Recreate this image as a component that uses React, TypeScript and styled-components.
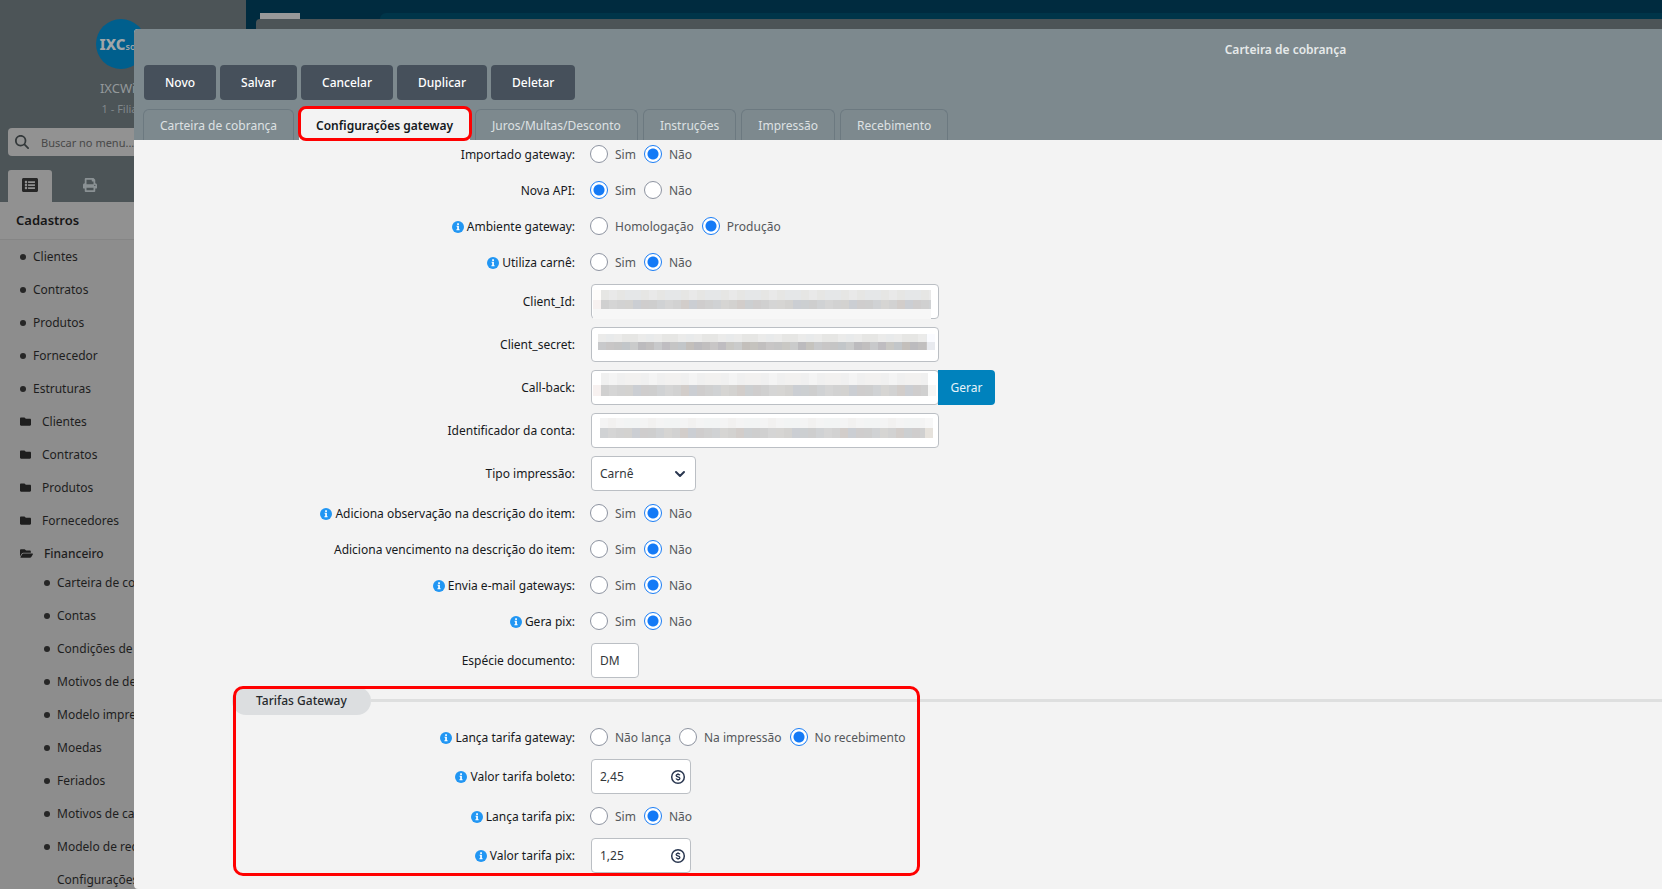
import React from 'react';
import styled, { createGlobalStyle, css } from 'styled-components';
import { ChevronDown } from 'lucide-react';
import { FaListAlt, FaFolder, FaFolderOpen, FaPrint } from 'react-icons/fa';
import { FaMagnifyingGlass } from 'react-icons/fa6';

const GlobalStyle = createGlobalStyle`
  * { box-sizing: border-box; }
  body { margin: 0; background: #8d8d8d; }
  body, button, input, select {
    font-family: "Noto Sans", sans-serif;
    font-size: 12px;
    line-height: 18px;
  }
`;

const Shell = styled.div`
  position: relative;
  display: flex;
  height: 100vh;
  overflow: hidden;
`;

const Sidebar = styled.aside`
  flex: none;
  width: 246px;
  background: #8d8d8d;
`;

const Profile = styled.header`
  display: flex;
  flex-direction: column;
  align-items: center;
  height: 202px;
  padding: 19px 4px 0 0;
  background: #4c5457;
`;

const Logo = styled.div`
  display: flex;
  align-items: baseline;
  justify-content: center;
  width: 50px;
  height: 50px;
  border-radius: 50%;
  background: #005f8d;
  color: #a0a6a8;
  font-size: 9px;
  font-weight: 600;
  line-height: 50px;

  b {
    font-size: 15px;
    font-weight: 800;
  }
`;

const UserName = styled.div`
  margin-top: 10px;
  color: #94999b;
  font-size: 13px;
`;

const Branch = styled.div`
  margin-top: 3px;
  color: #80878a;
  font-size: 11px;
`;

const SearchBox = styled.label`
  display: flex;
  align-items: center;
  gap: 12px;
  align-self: stretch;
  height: 28px;
  margin: 10px 4px 0 8px;
  padding-left: 7px;
  border-radius: 4px;
  background: #929292;
  color: #33383a;

  input {
    flex: 1;
    min-width: 0;
    padding: 2px 0 0;
    border: 0;
    background: transparent;
    font-size: 11px;
    outline: none;
  }
  input::placeholder { color: #484848; opacity: 1; }
`;

const SideTabs = styled.div`
  display: flex;
  align-self: stretch;
  gap: 16px;
  margin-top: 14px;
  padding-left: 8px;
`;

const SideTab = styled.button<{ $active?: boolean }>`
  display: flex;
  align-items: center;
  justify-content: center;
  width: 44px;
  height: 32px;
  padding: 0 0 2px;
  border: 0;
  border-radius: 3px 3px 0 0;
  background: ${(p) => (p.$active ? '#919191' : 'transparent')};
  color: ${(p) => (p.$active ? '#262626' : '#8a9194')};
`;

const MenuTitle = styled.h2`
  margin: 0;
  padding: 9px 16px 10px;
  border-bottom: 1px solid #858585;
  background: #919191;
  color: #161616;
  font-size: 13px;
  font-weight: 600;
  line-height: 18px;
`;

const MenuList = styled.ul<{ $nested?: boolean }>`
  margin: 0;
  padding: ${(p) => (p.$nested ? '0 0 0 24px' : '0')};
  ${(p) => p.$nested && 'margin-top: -4px;'}
  list-style: none;
`;

const MenuLink = styled.a<{ $folder?: boolean; $open?: boolean }>`
  display: flex;
  align-items: center;
  gap: ${(p) => (p.$folder ? 11 : 7)}px;
  height: 33px;
  padding-left: 20px;
  color: #1e1e1e;
  font-weight: ${(p) => (p.$open ? 500 : 400)};
  text-decoration: none;
  white-space: nowrap;
`;

const Bullet = styled.span<{ $hidden?: boolean }>`
  width: 6px;
  height: 6px;
  border-radius: 50%;
  background: ${(p) => (p.$hidden ? 'transparent' : '#262626')};
`;

const Workspace = styled.main`
  flex: 1;
  min-width: 0;
  padding-top: 13px;
  background: #002b3f;
`;

const TopBar = styled.div`
  display: flex;
  height: 6px;
  padding-left: 14px;
`;

const WorkspaceTab = styled.div`
  width: 40px;
  margin-right: 80px;
  background: #999;
`;

const TopBarFill = styled.div`
  flex: 1;
  border-top-left-radius: 12px;
  background: #003549;
`;

const BackWindow = styled.div`
  height: 100%;
  margin-left: 10px;
  border-top-left-radius: 4px;
  background: #4c5457;
`;

const Modal = styled.section`
  position: absolute;
  inset: 29px 0 0 134px;
  display: flex;
  flex-direction: column;
  overflow: hidden;
  border-radius: 4px 0 0 4px;
  background: #f3f3f3;
`;

const ModalHeader = styled.header`
  flex: none;
  padding: 12px 0 0 9px;
  background: #7d898e;
`;

const ModalTitle = styled.h1`
  margin: 0;
  padding-left: 766px;
  color: #e6e9ea;
  font-size: 12px;
  font-weight: 600;
  line-height: 18px;
  text-align: center;
`;

const Toolbar = styled.div`
  display: flex;
  gap: 4px;
  margin: 6px 0 9px 1px;
`;

const ToolButton = styled.button`
  height: 35px;
  padding: 0 21px;
  border: 0;
  border-radius: 4px;
  background: #46505b;
  color: #fff;
  font-weight: 500;
`;

const Tabs = styled.nav`
  display: flex;
  gap: 5px;
  height: 31px;
`;

const Tab = styled.button<{ $active?: boolean }>`
  position: relative;
  padding: 2px 16px 0;
  border: 1px solid #6c7980;
  border-bottom: 0;
  border-radius: 6px 6px 0 0;
  background: transparent;
  color: #dde1e3;

  ${(p) =>
    p.$active &&
    css`
      border-color: #f3f3f3;
      background: #f3f3f3;
      color: #14191d;
      font-weight: 600;
    `}
`;

const Highlight = styled.span<{ $tab?: boolean }>`
  position: absolute;
  border: 3px solid #f00;
  border-radius: 10px;
  pointer-events: none;
  ${(p) =>
    p.$tab
      ? 'inset: -4px -3px -1px -2px; border-radius: 8px; z-index: 1;'
      : 'top: 4px; left: 99px; width: 687px; height: 190px;'}
`;

const ModalBody = styled.div`
  flex: 1;
  overflow: hidden;
`;

const Form = styled.form`
  margin-top: -4px;
`;

const Row = styled.div<{ $tall?: boolean }>`
  display: grid;
  grid-template-columns: 441px 1fr;
  column-gap: 15px;
  align-items: center;
  height: ${(p) => (p.$tall ? 43 : 36)}px;
`;

const labelStyles = css`
  display: flex;
  align-items: center;
  justify-content: flex-end;
  gap: 3px;
  color: #16191c;
  white-space: nowrap;
`;

const FieldLabel = styled.label`${labelStyles}`;

const GroupLabel = styled.span`
  ${labelStyles}
  padding-top: 2px;
`;

const Choices = styled.div`
  display: flex;
  gap: 8px;
`;

const Choice = styled.label`
  display: flex;
  align-items: center;
  gap: 7px;
  color: #55585b;
  white-space: nowrap;
`;

const ChoiceText = styled.span`
  padding-top: 2px;
`;

const Radio = styled.input`
  appearance: none;
  width: 18px;
  height: 18px;
  margin: 0;
  border: 1px solid #8d93a0;
  border-radius: 50%;
  background: #fff;

  &:checked {
    border-color: #1a7df5;
    background: radial-gradient(circle, #147af6 5px, #fff 6px);
  }
`;

const Control = styled.div`
  position: relative;
  display: flex;
  width: max-content;
  margin-left: 1px;
`;

const fieldBox = css`
  height: 35px;
  padding: 0 8px;
  border: 1px solid #bbbfc4;
  border-radius: 4px;
  background: #fff;
  color: #33373b;
`;

const TextInput = styled.input<{ $width: number }>`
  ${fieldBox}
  width: ${(p) => p.$width}px;
`;

const Select = styled.select`
  ${fieldBox}
  width: 105px;
  appearance: none;
`;

const InlineIcon = styled.span<{ $right: number }>`
  position: absolute;
  top: 0;
  right: ${(p) => p.$right}px;
  display: flex;
  align-items: center;
  height: 35px;
  color: #2a3750;
  pointer-events: none;
`;

const GenerateButton = styled.button`
  width: 57px;
  height: 35px;
  margin-left: -1px;
  padding: 0;
  border: 0;
  border-radius: 0 4px 4px 0;
  background: #0082bd;
  color: #e6f3f9;
  z-index: 1;
`;

const MosaicSvg = styled.svg`
  position: absolute;
  top: 0;
  left: 0;
  pointer-events: none;
`;

const FeesSection = styled.section`
  position: relative;
`;

const SectionHead = styled.div`
  display: flex;
  align-items: center;
  height: 37px;
  padding-left: 98px;

  &::after {
    content: '';
    flex: 1;
    height: 3px;
    background: #dedfdf;
  }
`;

const SectionTitle = styled.h3`
  margin: 0;
  padding: 5px 24px;
  border-radius: 14px;
  background: #dcdee0;
  color: #26292c;
  font-size: 12px;
  font-weight: 500;
  line-height: 18px;
`;

const InfoIcon = () => (
  <svg width="12" height="12" viewBox="0 0 12 12" aria-hidden="true">
    <circle cx="6" cy="6" r="6" fill="#2196f3" />
    <path d="M5.2 2.3h1.7v1.6H5.2zM4.6 4.8h2.3v3.5h.7v1H4.4v-1h.8V5.8h-.6z" fill="#fff" />
  </svg>
);

const MoneyIcon = () => (
  <svg width="16" height="16" viewBox="0 0 16 16" fill="none" stroke="currentColor" aria-hidden="true">
    <circle cx="8" cy="8" r="6.3" strokeWidth="1.5" />
    <path d="M9.9 6.3C9.6 5.6 8.900 5.300 8 5.300c-1.100 0-1.900.5-1.900 1.300C6.100 8.400 9.900 7.500 9.900 9.400c0 .8-.8 1.300-1.900 1.300-1 0-1.700-.4-2-1.100M8 4.200v1.100M8 10.700v1.100" strokeWidth="1.300" />
  </svg>
);

type Edge = { x: number; y: number; w: number; h: number; fill: string };
type MosaicProps = {
  x: number;
  y: number;
  w: number;
  top: number;
  bottom: number;
  light: string[];
  dark: string[];
  edges?: Edge[];
};

const Mosaic = ({ x, y, w, top, bottom, light, dark, edges = [] }: MosaicProps) => {
  const cells = Array.from({ length: Math.ceil(w / 8) }, (_, i) => i);
  return (
    <MosaicSvg width="348" height="35" aria-hidden="true" shapeRendering="crispEdges">
      {edges.map((e) => (
        <rect key={`${e.x}-${e.y}`} x={e.x} y={e.y} width={e.w} height={e.h} fill={e.fill} />
      ))}
      {cells.map((i) => {
        const cw = Math.min(8, w - i * 8);
        return (
          <g key={i}>
            <rect x={x + i * 8} y={y} width={cw} height={top} fill={light[(i * i + i * 3 + x) % light.length]} />
            <rect
              x={x + i * 8}
              y={y + top}
              width={cw}
              height={bottom}
              fill={dark[(((i * 37 + x * 11) % 101) * 7) % dark.length]}
            />
          </g>
        );
      })}
    </MosaicSvg>
  );
};

type RadioRowProps = { name: string; label: string; info?: boolean; options?: string[]; checked: string };

const RadioRow = ({ name, label, info, options = ['Sim', 'Não'], checked }: RadioRowProps) => (
  <Row role="radiogroup" aria-labelledby={`${name}-label`}>
    <GroupLabel id={`${name}-label`}>
      {info && <InfoIcon />}
      {label}:
    </GroupLabel>
    <Choices>
      {options.map((o) => (
        <Choice key={o}>
          <Radio type="radio" name={name} value={o} defaultChecked={o === checked} />
          <ChoiceText>{o}</ChoiceText>
        </Choice>
      ))}
    </Choices>
  </Row>
);

type FieldRowProps = { id: string; label: string; info?: boolean; children: React.ReactNode };

const FieldRow = ({ id, label, info, children }: FieldRowProps) => (
  <Row $tall>
    <FieldLabel htmlFor={id}>
      {info && <InfoIcon />}
      {label}:
    </FieldLabel>
    <Control>{children}</Control>
  </Row>
);

const MoneyField = ({ id, label, value }: { id: string; label: string; value: string }) => (
  <FieldRow id={id} label={label} info>
    <TextInput id={id} $width={100} defaultValue={value} />
    <InlineIcon $right={5}>
      <MoneyIcon />
    </InlineIcon>
  </FieldRow>
);

const shortcuts = ['Clientes', 'Contratos', 'Produtos', 'Fornecedor', 'Estruturas'];
const folders = ['Clientes', 'Contratos', 'Produtos', 'Fornecedores'];
const finance = [
  'Carteira de cobrança',
  'Contas',
  'Condições de pagamento',
  'Motivos de desconto',
  'Modelo impressão',
  'Moedas',
  'Feriados',
  'Motivos de cancelamento',
  'Modelo de recibo',
  'Configurações',
];
const tabs = ['Carteira de cobrança', 'Configurações gateway', 'Juros/Multas/Desconto', 'Instruções', 'Impressão', 'Recebimento'];

const warm = ['#e6e6e4', '#e8eaeb', '#ebebea', '#e5e7e8', '#e9e9e9'];
const pale = ['#f0f0f0', '#f3f3f3', '#f2f4f4', '#f2f1f0', '#f4f4f4'];
const mid = ['#d0d2d4', '#d3d2d0', '#cfcdcd', '#d5d5d5', '#d2cdca', '#cecece', '#d6d5d3', '#cbced3', '#d0d0d0', '#d2d2d2', '#cccfd1'];
const deep = ['#c8c9cb', '#c9c8c4', '#bcbbbe', '#c8c6c6', '#c2c6c9', '#c5c3be', '#bfbdc1', '#cacbcb', '#c1bfbf', '#c5c5c5', '#c3bfbb'];

export default function App() {
  return (
    <>
      <GlobalStyle />
      <Shell>
        <Sidebar>
          <Profile>
            <Logo><b>IXC</b>soft</Logo>
            <UserName>IXCWill</UserName>
            <Branch>1 - Filial</Branch>
            <SearchBox>
              <FaMagnifyingGlass size={14} />
              <input aria-label="Buscar no menu" placeholder="Buscar no menu..." />
            </SearchBox>
            <SideTabs>
              <SideTab $active aria-label="Menu"><FaListAlt size={16} /></SideTab>
              <SideTab aria-label="Imprimir"><FaPrint size={14} /></SideTab>
            </SideTabs>
          </Profile>
          <MenuTitle>Cadastros</MenuTitle>
          <MenuList>
            {shortcuts.map((t) => (
              <li key={t}><MenuLink href="#"><Bullet />{t}</MenuLink></li>
            ))}
            {folders.map((t) => (
              <li key={t}><MenuLink href="#" $folder><FaFolder size={11} />{t}</MenuLink></li>
            ))}
            <li>
              <MenuLink href="#" $folder $open><FaFolderOpen size={13} />Financeiro</MenuLink>
              <MenuList $nested>
                {finance.map((t) => (
                  <li key={t}><MenuLink href="#"><Bullet $hidden={t === 'Configurações'} />{t}</MenuLink></li>
                ))}
              </MenuList>
            </li>
          </MenuList>
        </Sidebar>
        <Workspace>
          <TopBar><WorkspaceTab /><TopBarFill /></TopBar>
          <BackWindow />
        </Workspace>

        <Modal role="dialog" aria-labelledby="modal-title">
          <ModalHeader>
            <ModalTitle id="modal-title">Carteira de cobrança</ModalTitle>
            <Toolbar>
              {['Novo', 'Salvar', 'Cancelar', 'Duplicar', 'Deletar'].map((t) => (
                <ToolButton key={t} type="button">{t}</ToolButton>
              ))}
            </Toolbar>
            <Tabs>
              {tabs.map((t, i) => (
                <Tab key={t} type="button" $active={i === 1}>
                  {t}
                  {i === 1 && <Highlight $tab />}
                </Tab>
              ))}
            </Tabs>
          </ModalHeader>
          <ModalBody>
            <Form>
              <RadioRow name="importado" label="Importado gateway" checked="Não" />
              <RadioRow name="nova-api" label="Nova API" checked="Sim" />
              <RadioRow name="ambiente" label="Ambiente gateway" info options={['Homologação', 'Produção']} checked="Produção" />
              <RadioRow name="carne" label="Utiliza carnê" info checked="Não" />
              <FieldRow id="client-id" label="Client_Id">
                <TextInput id="client-id" $width={348} />
                <Mosaic
                  x={10} y={6} w={330} top={10} bottom={9} light={warm} dark={mid}
                  edges={[
                    { x: 2, y: 6, w: 8, h: 10, fill: '#fefcfa' },
                    { x: 2, y: 16, w: 8, h: 9, fill: '#f7f1f0' },
                    { x: 2, y: 25, w: 338, h: 10, fill: '#f7f7f7' },
                  ]}
                />
              </FieldRow>
              <FieldRow id="client-secret" label="Client_secret">
                <TextInput id="client-secret" $width={348} />
                <Mosaic
                  x={7} y={7} w={329} top={8} bottom={8} light={warm} dark={deep}
                  edges={[
                    { x: 336, y: 7, w: 8, h: 8, fill: '#fafbff' },
                    { x: 336, y: 15, w: 8, h: 8, fill: '#e8eaef' },
                  ]}
                />
              </FieldRow>
              <FieldRow id="call-back" label="Call-back">
                <TextInput id="call-back" $width={348} />
                <Mosaic
                  x={10} y={3} w={327} top={12} bottom={11} light={pale} dark={mid}
                  edges={[
                    { x: 2, y: 15, w: 8, h: 11, fill: '#f7f1f0' },
                    { x: 337, y: 15, w: 8, h: 11, fill: '#f6f6f5' },
                  ]}
                />
                <GenerateButton type="button">Gerar</GenerateButton>
              </FieldRow>
              <FieldRow id="conta" label="Identificador da conta">
                <TextInput id="conta" $width={348} />
                <Mosaic
                  x={9} y={5} w={325} top={10} bottom={10} light={pale} dark={mid}
                  edges={[
                    { x: 334, y: 5, w: 8, h: 10, fill: '#f7f7f7' },
                    { x: 334, y: 15, w: 8, h: 10, fill: '#e6e2dc' },
                  ]}
                />
              </FieldRow>
              <FieldRow id="tipo" label="Tipo impressão">
                <Select id="tipo" defaultValue="Carnê"><option>Carnê</option></Select>
                <InlineIcon $right={8}><ChevronDown size={16} strokeWidth={3} /></InlineIcon>
              </FieldRow>
              <RadioRow name="observacao" label="Adiciona observação na descrição do item" info checked="Não" />
              <RadioRow name="vencimento" label="Adiciona vencimento na descrição do item" checked="Não" />
              <RadioRow name="email" label="Envia e-mail gateways" info checked="Não" />
              <RadioRow name="gera-pix" label="Gera pix" info checked="Não" />
              <FieldRow id="especie" label="Espécie documento">
                <TextInput id="especie" $width={48} defaultValue="DM" />
              </FieldRow>
              <FeesSection>
                <SectionHead><SectionTitle>Tarifas Gateway</SectionTitle></SectionHead>
                <RadioRow
                  name="tarifa-gateway"
                  label="Lança tarifa gateway"
                  info
                  options={['Não lança', 'Na impressão', 'No recebimento']}
                  checked="No recebimento"
                />
                <MoneyField id="valor-boleto" label="Valor tarifa boleto" value="2,45" />
                <RadioRow name="tarifa-pix" label="Lança tarifa pix" info checked="Não" />
                <MoneyField id="valor-pix" label="Valor tarifa pix" value="1,25" />
                <Highlight />
              </FeesSection>
            </Form>
          </ModalBody>
        </Modal>
      </Shell>
    </>
  );
}
